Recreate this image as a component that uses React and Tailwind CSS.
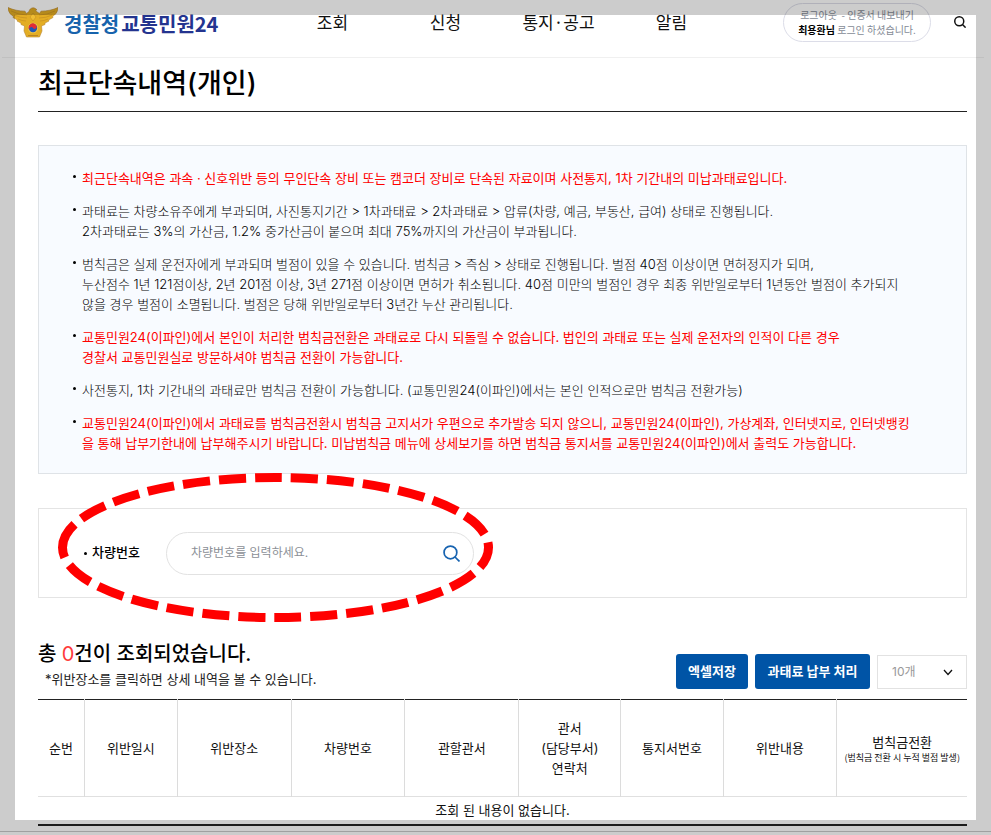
import React from "react";

const notices = [
  {
    red: true,
    lines: ["최근단속내역은 과속 · 신호위반 등의 무인단속 장비 또는 캠코더 장비로 단속된 자료이며 사전통지, 1차 기간내의 미납과태료입니다."],
  },
  {
    lines: [
      "과태료는 차량소유주에게 부과되며, 사진통지기간 > 1차과태료 > 2차과태료 > 압류(차량, 예금, 부동산, 급여) 상태로 진행됩니다.",
      "2차과태료는 3%의 가산금, 1.2% 중가산금이 붙으며 최대 75%까지의 가산금이 부과됩니다.",
    ],
  },
  {
    lines: [
      "범칙금은 실제 운전자에게 부과되며 벌점이 있을 수 있습니다. 범칙금 > 즉심 > 상태로 진행됩니다. 벌점 40점 이상이면 면허정지가 되며,",
      "누산점수 1년 121점이상, 2년 201점 이상, 3년 271점 이상이면 면허가 취소됩니다. 40점 미만의 벌점인 경우 최종 위반일로부터 1년동안 벌점이 추가되지",
      "않을 경우 벌점이 소멸됩니다. 벌점은 당해 위반일로부터 3년간 누산 관리됩니다.",
    ],
  },
  {
    red: true,
    lines: [
      "교통민원24(이파인)에서 본인이 처리한 범칙금전환은 과태료로 다시 되돌릴 수 없습니다. 법인의 과태료 또는 실제 운전자의 인적이 다른 경우",
      "경찰서 교통민원실로 방문하셔야 범칙금 전환이 가능합니다.",
    ],
  },
  {
    lines: ["사전통지, 1차 기간내의 과태료만 범칙금 전환이 가능합니다. (교통민원24(이파인)에서는 본인 인적으로만 범칙금 전환가능)"],
  },
  {
    red: true,
    lines: [
      "교통민원24(이파인)에서 과태료를 범칙금전환시 범칙금 고지서가 우편으로 추가발송 되지 않으니, 교통민원24(이파인), 가상계좌, 인터넷지로, 인터넷뱅킹",
      "을 통해 납부기한내에 납부해주시기 바랍니다. 미납범칙금 메뉴에 상세보기를 하면 범칙금 통지서를 교통민원24(이파인)에서 출력도 가능합니다.",
    ],
  },
];

function Emblem() {
  return (
    <svg width="50" height="31" viewBox="0 0 50 31" className="shrink-0" aria-hidden="true">
      <path
        d="M0 .5 C5 3 11 4 17 4.200 L18.500 6.500 L21 4.500 C21.500 2.500 22.500 1.200 25 .8 C26.500 .8 27.500 1.500 29 2.800 L27.500 3.200 L28.500 4.500 L31.500 6.500 L33 4.200 C39 4 45 3 50 .5 C50 5 47 8 44.500 9.500 L45 10.500 L40.500 13 L41 14 L37 16 L37 17.500 L33.500 19 L34 24 L31.500 30 L18.500 30 L16 24 L16.500 19 L13 17.500 L13 16 L9 14 L9.500 13 L5 10.500 L5.500 9.500 C3 8 0 5 0 .5Z"
        fill="#e3ad24"
        stroke="#b98633"
        strokeWidth=".6"
      />
      <path
        d="M3 4 Q11 8 19 8 M6 8 Q12 11 19 11 M10 12 Q14 14 18 14 M47 4 Q39 8 31 8 M44 8 Q38 11 31 11 M40 12 Q36 14 32 14"
        fill="none"
        stroke="#c68f23"
        strokeWidth=".7"
      />
      <path d="M25 6 L28 10 L25 14 L22 10Z" fill="#efbd33" stroke="#bd8725" strokeWidth=".5" />
      <path d="M20 28.500 H30" stroke="#b07a22" strokeWidth=".8" />
      <circle cx="25" cy="21" r="5.200" fill="#eec046" />
      <circle cx="25" cy="21" r="4.200" fill="#1f58b5" />
      <path d="M21.400 23.100 A4.200 4.200 0 1 1 28.600 18.900 A2.100 2.100 0 0 1 25 21 A2.100 2.100 0 0 0 21.400 23.100Z" fill="#e12c35" />
    </svg>
  );
}

function SearchIcon({ size, strokeWidth }) {
  return (
    <svg width={size} height={size} viewBox="0 0 16 16" fill="none" stroke="currentColor" strokeWidth={strokeWidth} aria-hidden="true">
      <circle cx="7" cy="7" r="6" />
      <path d="M11.300 11.300 L15.500 15.500" />
    </svg>
  );
}

function Header() {
  return (
    <header className="mr-[7px] ml-[2px] h-[58px] border-b border-[#f0f0f0] pr-[18px] pl-[6px] font-['Noto_Sans_CJK_KR',sans-serif]">
      <div className="flex h-11 items-center">
        <a href="#home" className="flex w-[268px] shrink-0 items-center gap-[6px] text-[20px] leading-6 font-bold">
          <Emblem />
          <span className="flex gap-[2px] pt-1">
            <span className="text-[#1763ac]">경찰청</span>
            <span className="text-[#24348f]">교통민원24</span>
          </span>
        </a>
        <nav className="grid w-[452px] shrink-0 grid-cols-4 text-center text-[17px] leading-6 text-[#111]">
          <a href="#view">조회</a>
          <a href="#apply">신청</a>
          <a href="#notice">통지·공고</a>
          <a href="#alarm">알림</a>
        </nav>
        <div className="ml-auto flex h-[39px] w-[148px] shrink-0 flex-col justify-center rounded-full border border-[#dcdde8] text-center text-[10px] leading-[15px] text-[#858b96]">
          <p>
            <a href="#logout">로그아웃</a>&nbsp; - <a href="#cert">인증서 내보내기</a>
          </p>
          <p>
            <strong className="font-bold text-black">최용환님</strong> 로그인 하셨습니다.
          </p>
        </div>
        <button type="button" aria-label="검색" className="ml-[23px] text-[#111]">
          <SearchIcon size={12} strokeWidth={2} />
        </button>
      </div>
    </header>
  );
}

function SearchPanel() {
  return (
    <form className="relative mt-[34px] flex h-[90px] items-center border border-[#e4e4e4] pl-[45px]">
      <label htmlFor="car" className="flex w-[82px] items-center gap-[5px] text-[13px] font-medium text-black">
        <span className="size-[3px] rounded-full bg-black" />
        차량번호
      </label>
      <div className="flex h-[43px] w-[308px] items-center rounded-full border border-[#e2e2e2] pr-[13px] pl-6">
        <input
          id="car"
          type="text"
          placeholder="차량번호를 입력하세요."
          className="min-w-0 flex-1 text-[12px] outline-none placeholder:text-[#8b8f96]"
        />
        <button type="button" aria-label="차량번호 검색" className="text-[#1763b0]">
          <SearchIcon size={17} strokeWidth={1.6} />
        </button>
      </div>
      <svg className="pointer-events-none absolute -top-[36px] left-[19px]" width="435" height="149" viewBox="0 0 435 149" fill="none" aria-hidden="true">
        <path
          d="M4.500 74.500 A213 70 0 0 1 217.500 4.500 A213 70 0 0 1 430.500 74.500 A213 70 0 0 1 217.500 144.500 A213 70 0 0 1 4.500 74.500"
          stroke="#ff0000"
          strokeWidth="9"
          strokeDasharray="27 9"
        />
      </svg>
    </form>
  );
}

function ResultBar() {
  return (
    <div className="mt-[41px] flex items-end justify-between pb-[9px]">
      <div>
        <h2 className="text-[20px] leading-[30px] font-medium text-black">
          총 <span className="font-normal text-[#ff3b3b]">0</span>건이 조회되었습니다.
        </h2>
        <p className="pl-[7px] text-[13px] leading-[21px] text-[#222]">*위반장소를 클릭하면 상세 내역을 볼 수 있습니다.</p>
      </div>
      <div className="flex items-center gap-[7px] pb-px">
        <button type="button" className="h-[35px] w-[72px] rounded-[3px] bg-[#0054a6] text-[13px] font-bold text-white">
          엑셀저장
        </button>
        <button type="button" className="h-[35px] w-[115px] rounded-[3px] bg-[#0054a6] text-[13px] font-bold text-white">
          과태료 납부 처리
        </button>
        <div className="relative w-[90px]">
          <select aria-label="표시 개수" className="h-[34px] w-full appearance-none border border-[#e2e2e2] bg-white pl-[14px] text-[12px] text-[#999]">
            <option>10개</option>
          </select>
          <svg className="pointer-events-none absolute top-[14px] right-[14px]" width="10" height="7" viewBox="0 0 10 7" fill="none" stroke="#111" strokeWidth="1.300" aria-hidden="true">
            <path d="M1 1 L5 5.500 L9 1" />
          </svg>
        </div>
      </div>
    </div>
  );
}

function ResultTable() {
  const th = "border-r border-[#dcdcdc] p-0 font-normal last:border-r-0";
  return (
    <table className="w-full table-fixed border-y border-b-2 border-[#222] text-center text-[13px] leading-5 text-[#111]">
      <colgroup>
        <col className="w-[5%]" />
        <col className="w-[10%]" />
        <col className="w-[12.25%]" />
        <col className="w-[12.25%]" />
        <col className="w-[12.25%]" />
        <col className="w-[11%]" />
        <col className="w-[11%]" />
        <col className="w-[12.25%]" />
        <col />
      </colgroup>
      <thead>
        <tr className="h-[97px] border-b border-[#e0e0e0]">
          <th className={th}>순번</th>
          <th className={th}>위반일시</th>
          <th className={th}>위반장소</th>
          <th className={th}>차량번호</th>
          <th className={th}>관할관서</th>
          <th className={th}>
            관서
            <br />
            (담당부서)
            <br />
            연락처
          </th>
          <th className={th}>통지서번호</th>
          <th className={th}>위반내용</th>
          <th className={th}>
            범칙금전환
            <small className="block font-['Noto_Sans_CJK_KR',sans-serif] text-[9px] leading-3 whitespace-nowrap">(범칙금 전환 시 누적 벌점 발생)</small>
          </th>
        </tr>
      </thead>
      <tbody>
        <tr className="h-[28px]">
          <td colSpan={9}>조회 된 내용이 없습니다.</td>
        </tr>
      </tbody>
    </table>
  );
}

export default function App() {
  return (
    <div className="relative min-h-screen bg-white font-[Inter,'Noto_Sans_CJK_KR',sans-serif] break-keep">
      <Header />
      <main className="pr-6 pl-[38px]">
        <h1 className="border-b border-[#222] pt-[7px] pb-2 text-[27px] leading-[38px] font-medium text-black">최근단속내역(개인)</h1>
        <ul className="mt-[33px] flex flex-col gap-[13px] border border-[#dfe3e7] bg-[#f8fbff] pt-[22px] pr-8 pb-5 pl-[34px] text-[13px] leading-5">
          {notices.map((n) => (
            <li key={n.lines[0]} className="flex gap-[6px]">
              <span className="mt-[7px] size-[3px] shrink-0 rounded-full bg-black" />
              <p className={n.red ? "font-normal text-[#ff0000]" : "font-light text-black"}>
                {n.lines.map((line) => (
                  <span key={line} className="block">
                    {line}
                  </span>
                ))}
              </p>
            </li>
          ))}
        </ul>
        <SearchPanel />
        <ResultBar />
        <ResultTable />
      </main>
      <hr className="mt-[5px] border-[#c8c8c8]" />
      <div className="pointer-events-none absolute inset-0 border-[15px] border-black/20" />
    </div>
  );
}
